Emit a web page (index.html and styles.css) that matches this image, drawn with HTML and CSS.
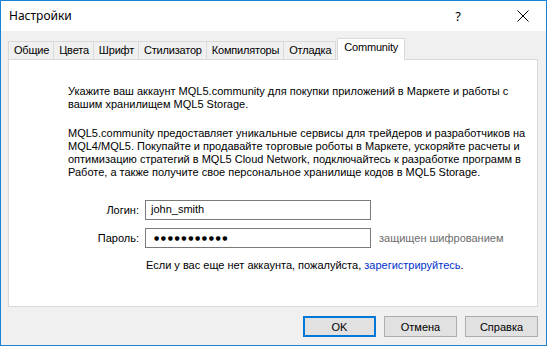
FILE: index.html
```html
<!DOCTYPE html>
<html lang="ru">
  <head>
    <meta charset="UTF-8" />
    <title>Настройки</title>
    <link rel="stylesheet" href="styles.css">
  </head>
  <body>
    <div class="window">
      <div class="titlebar">
        <span class="title">Настройки</span>
        <div class="controls">
          <span class="help">?</span>
          <svg class="close" width="12" height="12" viewBox="0 0 12 12">
            <path d="M0.5 0.5 L11.5 11.5 M11.5 0.5 L0.5 11.5" stroke="#000" stroke-width="1" fill="none" />
          </svg>
        </div>
      </div>

      <div class="dialog">
        <div class="tabs">
          <div class="tab">Общие</div>
          <div class="tab">Цвета</div>
          <div class="tab">Шрифт</div>
          <div class="tab">Стилизатор</div>
          <div class="tab">Компиляторы</div>
          <div class="tab">Отладка</div>
          <div class="tab active">Community</div>
        </div>

        <div class="panel">
          <p class="intro">Укажите ваш аккаунт MQL5.community для покупки приложений в Маркете и работы с<br>вашим хранилищем MQL5 Storage.</p>
          <p class="about">MQL5.community предоставляет уникальные сервисы для трейдеров и разработчиков на<br>MQL4/MQL5. Покупайте и продавайте торговые роботы в Маркете, ускоряйте расчеты и<br>оптимизацию стратегий в MQL5 Cloud Network, подключайтесь к разработке программ в<br>Работе, а также получите свое персональное хранилище кодов в MQL5 Storage.</p>

          <div class="login-form">
            <label for="login">Логин:</label>
            <div class="field"><span id="login">john_smith</span></div>
            <span></span>
            <label for="password">Пароль:</label>
            <div class="field password"><span id="password">●●●●●●●●●●●</span></div>
            <span class="hint">защищен шифрованием</span>
          </div>

          <p class="register">Если у вас еще нет аккаунта, пожалуйста, <a href="#">зарегистрируйтесь</a>.</p>
        </div>

        <div class="buttons">
          <button class="btn default">OK</button>
          <button class="btn">Отмена</button>
          <button class="btn">Справка</button>
        </div>
      </div>
    </div>
  </body>
</html>
```

FILE: styles.css
```css
* {
  margin: 0;
  padding: 0;
  box-sizing: border-box;
}

body {
  width: 547px;
  height: 346px;
  font-family: 'Liberation Sans', Arial, sans-serif;
  font-size: 11px;
  color: #000000;
  background: #f0f0f0;
}

.window {
  width: 547px;
  height: 346px;
  border: 1px solid #1883d7;
  display: flex;
  flex-direction: column;
  background-color: #f0f0f0;
}

/* Title bar */

.titlebar {
  height: 30px;
  background: #ffffff;
  display: flex;
  align-items: center;
  justify-content: space-between;
  padding-left: 8px;
}

.title {
  font-family: 'Noto Sans', sans-serif;
  font-size: 12px;
  margin-top: -1px;
}

.controls {
  display: flex;
  align-items: center;
  height: 100%;
}

.help {
  font-family: 'Noto Sans', sans-serif;
  font-size: 13px;
  width: 46px;
  text-align: center;
  margin-right: 36px;
  margin-top: -1px;
}

.close {
  margin-right: 17px;
  margin-top: -1px;
}

/* Dialog body */

.dialog {
  flex: 1;
  padding: 6px 7px 0 7px;
  display: flex;
  flex-direction: column;
}

.tabs {
  display: flex;
  align-items: flex-end;
  height: 22px;
  position: relative;
  z-index: 1;
}

.tab {
  height: 18px;
  line-height: 17px;
  padding: 0 4px 0 5px;
  border: 1px solid #d9d9d9;
  border-bottom: none;
  border-right: none;
  background: #f0f0f0;
  letter-spacing: -0.2px;
}

.tab:nth-child(6) {
  border-right: 1px solid #d9d9d9;
}

.tab.active {
  height: 22px;
  line-height: 16px;
  background: #ffffff;
  padding: 0 6px 0 6px;
  margin-left: 1px;
  border-left: 1px solid #d9d9d9;
  border-right: 1px solid #d9d9d9;
  margin-bottom: -1px;
}

.panel {
  width: 530px;
  height: 248px;
  background: #ffffff;
  border: 1px solid #d9d9d9;
  padding: 25px 0 0 59px;
  line-height: 13px;
}

.about {
  margin-top: 16px;
}

.login-form {
  display: grid;
  grid-template-columns: 71px 226px auto;
  grid-auto-rows: 20px;
  row-gap: 8px;
  column-gap: 6px;
  align-items: center;
  margin-top: 21px;
  margin-left: 0;
}

.login-form label {
  text-align: right;
}

.field {
  height: 20px;
  border: 1px solid #7a7a7a;
  background: #ffffff;
  padding: 0 0 0 5px;
  line-height: 17px;
}

.field.password {
  padding-left: 8px;
  font-family: 'DejaVu Sans', sans-serif;
  font-size: 6px;
  letter-spacing: 1.6px;
  line-height: 18px;
}

.hint {
  color: #6d6d6d;
  margin-left: 2px;
}

.register {
  margin-top: 11px;
  padding-left: 78px;
}

.register a {
  color: #0033cc;
  text-decoration: none;
}

/* Buttons */

.buttons {
  display: flex;
  justify-content: flex-end;
  gap: 8px;
  margin-top: 9px;
  width: 530px;
}

.btn {
  width: 73px;
  height: 21px;
  background: #e1e1e1;
  border: 1px solid #adadad;
  font-family: 'Liberation Sans', Arial, sans-serif;
  font-size: 11px;
  font-weight: normal;
  color: #000000;
}

.btn.default {
  border: 2px solid #0078d7;
}
```
